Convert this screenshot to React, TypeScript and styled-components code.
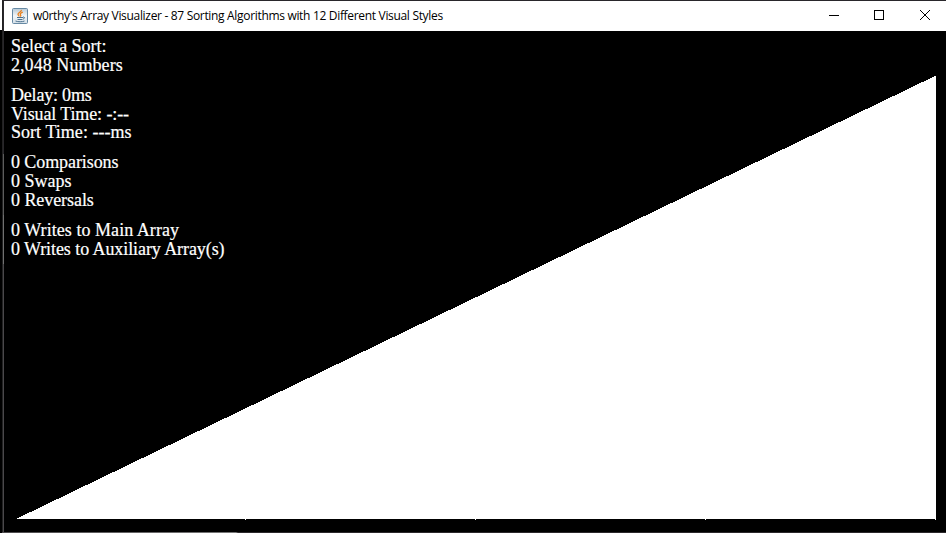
import React from "react";
import styled, { createGlobalStyle } from "styled-components";

const GlobalStyle = createGlobalStyle`
  * { box-sizing: border-box; }
  html, body { margin: 0; background: #000; overflow: hidden; }
`;

const Desktop = styled.div`
  width: 946px;
  height: 533px;
  display: grid;
  grid-template-columns: 2px 944px;
  background: #000;
`;

const Backdrop = styled.div`
  background: linear-gradient(#fff 0 30px, #000 30px);
`;

const Frame = styled.div`
  display: grid;
  grid-template-columns: 2px 942px;
  grid-template-rows: 1px 30px 501px 1px;
  background: #29272b;
`;

const TopEdge = styled.div`
  grid-column: 1 / 3;
  background: #29272b;
`;

const LeftEdge = styled.div`
  grid-row: 2 / 4;
  background: linear-gradient(#29272b 0 153px, #5c5c5c 153px 214px, #707070 214px 263px, #4a484b 263px);
  border-left: 1px solid #222;
`;

const BottomEdge = styled.div`
  grid-column: 1 / 3;
  background: linear-gradient(90deg, #4c4a4c, #777 234px, #2b282b 236px);
`;

const TitleBar = styled.header`
  display: flex;
  align-items: center;
  background: #fff;
  padding-left: 8px;
  overflow: hidden;
`;

const Title = styled.h1`
  flex: 1;
  margin: 0 0 0 5px;
  font: 400 12px/16px "Open Sans", "Noto Sans", sans-serif;
  letter-spacing: -0.32px;
  color: #000;
  white-space: nowrap;
`;

const WindowControls = styled.div`
  display: flex;
  align-self: flex-start;
  margin-right: -2px;
`;

const WindowButton = styled.button<{ $width?: number }>`
  width: ${({ $width = 46 }) => $width}px;
  height: 28px;
  padding: 0;
  border: 0;
  display: grid;
  place-items: center;
  background: none;
`;

const Canvas = styled.main`
  display: grid;
  background: #000;
`;

const Stats = styled.section`
  grid-area: 1 / 1;
  padding: 6px 0 0 7px;
  display: flex;
  flex-direction: column;
  gap: 11px;
  z-index: 1;
`;

const Group = styled.div`
  display: flex;
  flex-direction: column;
`;

const Line = styled.span<{ $tracking: number; $height?: number }>`
  font: 400 18px/19px "Liberation Serif", "Times New Roman", serif;
  height: ${({ $height = 19 }) => $height}px;
  letter-spacing: ${({ $tracking }) => $tracking}px;
  color: #fff;
  -webkit-text-stroke: 0.2px #fff;
  white-space: nowrap;
`;

const Chart = styled.svg`
  grid-area: 1 / 1;
  display: block;
`;

type Stat = { text: string; tracking: number; height?: number };

const groups: Stat[][] = [
  [
    { text: "Select a Sort:", tracking: -0.04 },
    { text: "2,048 Numbers", tracking: 0.06 },
  ],
  [
    { text: "Delay: 0ms", tracking: -0.2 },
    { text: "Visual Time: -:--", tracking: -0.12, height: 18 },
    { text: "Sort Time: ---ms", tracking: 0.04 },
  ],
  [
    { text: "0 Comparisons", tracking: -0.08 },
    { text: "0 Swaps", tracking: 0 },
    { text: "0 Reversals", tracking: -0.06 },
  ],
  [
    { text: "0 Writes to Main Array", tracking: 0.05 },
    { text: "0 Writes to Auxiliary Array(s)", tracking: -0.08 },
  ],
];

function JavaIcon() {
  return (
    <svg width="16" height="16" viewBox="0 0 16 16" fill="none">
      <defs>
        <linearGradient id="tile" x2="0" y2="1">
          <stop stopColor="#b7cad8" />
          <stop offset=".5" stopColor="#f2f5f7" />
          <stop offset="1" stopColor="#d3dfe8" />
        </linearGradient>
      </defs>
      <rect x=".5" y=".5" width="15" height="15" rx="1" fill="url(#tile)" stroke="#6689a4" />
      <path d="M9.4 1.8C10 4 5.5 4.5 6 6.5c.2.8 1.1 1 1.2 2M10.8 4.2C8.8 5 7.6 5.8 8.6 7c.5.6.2 1.1-.3 1.6" stroke="#e8811f" strokeWidth="1.3" />
      <path d="M5 9.5h6M11 9c2-.4 2 1.6 0 2M5.5 11.5h5M3.5 13c2.5 1 7 1 9 0" stroke="#4b718f" />
    </svg>
  );
}

export default function App() {
  return (
    <>
      <GlobalStyle />
      <Desktop>
        <Backdrop />
        <Frame>
          <TopEdge />
          <LeftEdge />
          <TitleBar>
            <JavaIcon />
            <Title>w0rthy's Array Visualizer - 87 Sorting Algorithms with 12 Different Visual Styles</Title>
            <WindowControls>
              <WindowButton $width={44} aria-label="Minimize">
                <svg width="10" height="10" shapeRendering="crispEdges"><path d="M0 5h10v1H0z" /></svg>
              </WindowButton>
              <WindowButton aria-label="Maximize">
                <svg width="10" height="10" shapeRendering="crispEdges"><path d="M.5.5h9v9h-9z" fill="none" stroke="#000" /></svg>
              </WindowButton>
              <WindowButton aria-label="Close">
                <svg width="10" height="10"><path d="M0 0l10 10M10 0L0 10" stroke="#000" /></svg>
              </WindowButton>
            </WindowControls>
          </TitleBar>
          <Canvas>
            <Stats>
              {groups.map((lines) => (
                <Group key={lines[0].text}>
                  {lines.map(({ text, tracking, height }) => (
                    <Line key={text} $tracking={tracking} $height={height}>{text}</Line>
                  ))}
                </Group>
              ))}
            </Stats>
            <Chart width="942" height="501" viewBox="4 31 942 501" shapeRendering="crispEdges">
              <path d="M16 519L936 75.5V520h-1v-1z" fill="#fff" />
              <path d="M245 519h1v1h-1zM475 519h1v1h-1zM705 519h1v1h-1z" fill="#fff" />
            </Chart>
          </Canvas>
          <BottomEdge />
        </Frame>
      </Desktop>
    </>
  );
}
